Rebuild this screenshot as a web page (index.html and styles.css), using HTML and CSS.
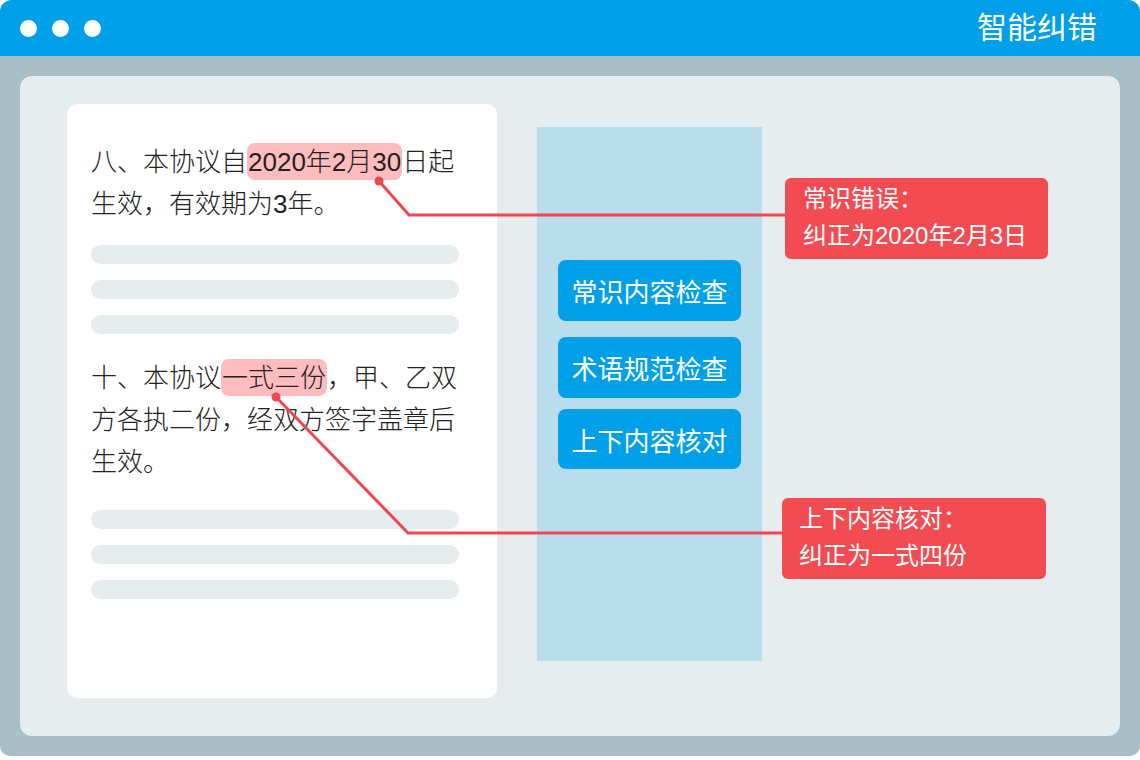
FILE: index.html
```html
<!DOCTYPE html>
<html>
	<head>
		<meta charset="UTF-8">
		<title>智能纠错</title>
		<link rel="stylesheet" href="styles.css">
	</head>
	<body>
		<div class="window">
			<div class="titlebar">
				<div class="dots">
					<span class="dot"></span>
					<span class="dot"></span>
					<span class="dot"></span>
				</div>
				<div class="title">智能纠错</div>
			</div>
			<div class="panel">
				<div class="doc">
					<p class="para">八、本协议自<span class="mark">2020年2月30</span>日起<br>生效，有效期为3年。</p>
					<div class="skeleton">
						<span class="bar"></span>
						<span class="bar"></span>
						<span class="bar"></span>
					</div>
					<p class="para para-2">十、本协议<span class="mark">一式三份</span>，甲、乙双<br>方各执二份，经双方签字盖章后<br>生效。</p>
					<div class="skeleton skeleton-2">
						<span class="bar"></span>
						<span class="bar"></span>
						<span class="bar"></span>
					</div>
				</div>
				<div class="checks">
					<div class="check">常识内容检查</div>
					<div class="check">术语规范检查</div>
					<div class="check">上下内容核对</div>
				</div>
				<div class="notes">
					<div class="note">常识错误：<br>纠正为2020年2月3日</div>
					<div class="note note-2">上下内容核对：<br>纠正为一式四份</div>
				</div>
			</div>
			<!-- 连线：从标记处指向右侧的纠错提示 -->
			<svg class="links" width="1140" height="756" viewBox="0 0 1140 756">
				<polyline points="379,181 409,215 785,215" />
				<circle cx="379" cy="181" r="4.5" />
				<polyline points="276,397 408,533 782,533" />
				<circle cx="276" cy="397" r="4.5" />
			</svg>
		</div>
	</body>
</html>
```

FILE: styles.css
```css
body{
	margin: 0;
	background: #fff;
	font-family: "Liberation Sans", "Noto Sans CJK SC", sans-serif;
}
.window{
	position: relative;
	width: 1140px;
	height: 756px;
	background: #a9bfc7;
	border-radius: 12px 12px 10px 10px;
	overflow: hidden;
}
.titlebar{
	display: flex;
	align-items: center;
	justify-content: space-between;
	height: 56px;
	padding: 0 43px 0 20px;
	background: #00a0e9;
}
.dots{
	display: flex;
	gap: 15px;
}
.dot{
	width: 17px;
	height: 17px;
	border-radius: 50%;
	background: #fff;
}
.title{
	color: #fff;
	font-size: 30px;
	line-height: 1;
}
.panel{
	display: flex;
	align-items: flex-start;
	box-sizing: border-box;
	height: 660px;
	margin: 20px;
	padding: 28px 0 0 47px;
	background: #e7ecef;
	border-radius: 12px;
}
.doc{
	box-sizing: border-box;
	width: 430px;
	height: 594px;
	padding: 37px 38px 0 24px;
	background: #fff;
	border-radius: 10px;
}
.para{
	margin: 0;
	color: #222;
	font-size: 26px;
	font-weight: 300;
	line-height: 42px;
	white-space: nowrap;
}
.para-2{
	margin-top: 23px;
}
.mark{
	padding: 4px 1px 3px;
	background: #ffbcbf;
	border-radius: 8px;
}
.skeleton{
	display: flex;
	flex-direction: column;
	gap: 16px;
	margin-top: 20px;
}
.skeleton-2{
	margin-top: 27px;
}
.bar{
	height: 19px;
	background: #e7ecef;
	border-radius: 10px;
}
.checks{
	box-sizing: border-box;
	width: 225px;
	height: 534px;
	margin: 23px 0 0 40px;
	padding: 133px 0 0 21px;
	background: #b9ddec;
}
.check{
	display: flex;
	align-items: center;
	justify-content: center;
	width: 183px;
	height: 61px;
	color: #fff;
	font-size: 26px;
	background: #00a0e9;
	border-radius: 8px;
}
.check + .check{
	margin-top: 16px;
}
.check:last-child{
	height: 60px;
	margin-top: 11px;
}
.notes{
	display: flex;
	flex-direction: column;
	align-items: flex-start;
	margin: 74px 0 0 23px;
}
.note{
	box-sizing: border-box;
	width: 263px;
	height: 81px;
	padding: 2px 18px 0;
	color: #fff;
	font-size: 24px;
	line-height: 37px;
	background: #f24b52;
	border-radius: 6px;
}
.note-2{
	width: 264px;
	margin: 239px 0 0 -3px;
	padding-left: 17px;
}
.links{
	position: absolute;
	top: 0;
	left: 0;
	pointer-events: none;
}
.links polyline{
	fill: none;
	stroke: #f0474f;
	stroke-width: 3;
}
.links circle{
	fill: #f0474f;
}
```
